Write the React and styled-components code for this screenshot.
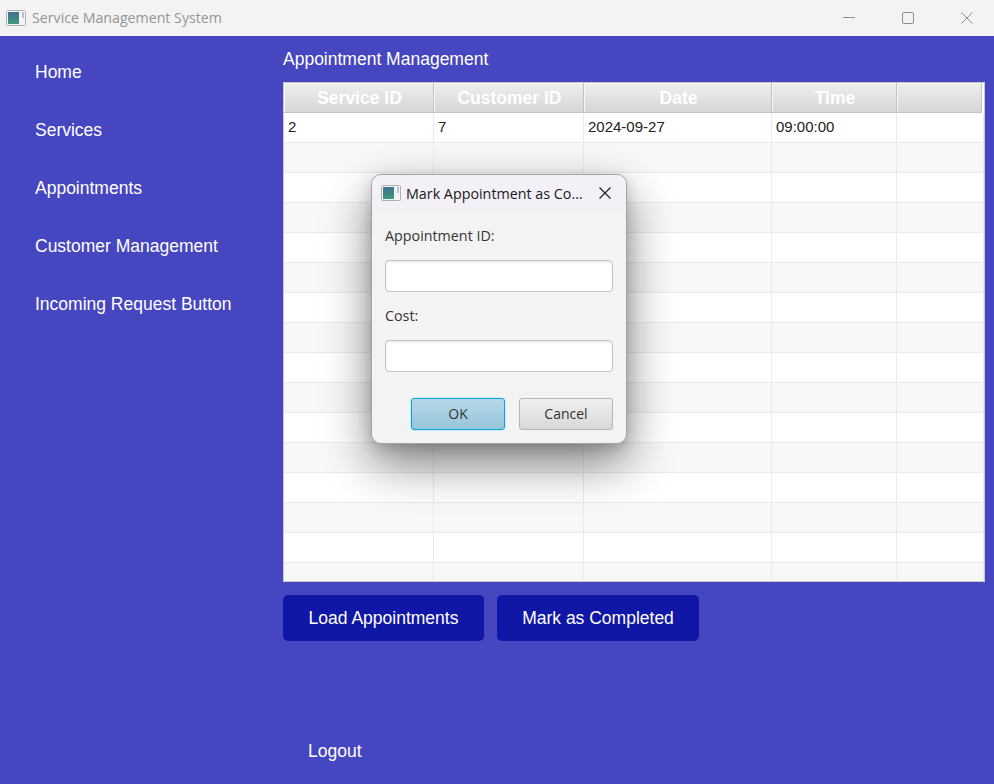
import React from 'react';
import styled, { createGlobalStyle } from 'styled-components';

const Global = createGlobalStyle`
  html, body { margin: 0; padding: 0; background: #4646c1; }
  * { box-sizing: border-box; }
`;

const Windowed = styled.div`
  position: relative;
  width: 994px;
  height: 784px;
  overflow: hidden;
  display: flex;
  flex-direction: column;
  background: #4646c1;
  font-family: "Liberation Sans", Arial, sans-serif;
`;

const TitleBar = styled.header`
  height: 36px;
  flex: none;
  display: flex;
  align-items: center;
  background: #f3f3f3;
  padding-left: 6px;
`;

const TitleText = styled.span`
  margin: -2px 0 0 6px;
  font: 14.2px "Open Sans", "Noto Sans", sans-serif;
  color: #959595;
`;

const WinButtons = styled.div`
  margin-left: auto;
  margin-right: -2px;
  display: flex;
  align-items: center;
`;

const WinButton = styled.span`
  width: 59px;
  height: 36px;
  display: flex;
  align-items: center;
  justify-content: center;
  color: #8f8f8f;
`;

const Body = styled.div`
  flex: 1;
  display: flex;
  min-height: 0;
`;

const Sidebar = styled.nav`
  width: 283px;
  flex: none;
  padding: 26px 0 0 35px;
  display: flex;
  flex-direction: column;
  gap: 37px;
`;

const NavItem = styled.div`
  font-size: 17.5px;
  line-height: 21px;
  color: #fff;
`;

const Main = styled.main`
  flex: 1;
  display: flex;
  flex-direction: column;
  padding: 13px 9px 0 0;
`;

const Heading = styled.h1`
  margin: 0 0 12px;
  font-size: 17.5px;
  font-weight: 400;
  line-height: 21px;
  color: #fff;
`;

const Table = styled.div`
  width: 702px;
  height: 500px;
  border: 1px solid #c8c8c8;
  background: #fff;
  overflow: hidden;
`;

const HeaderRow = styled.div`
  display: grid;
  grid-template-columns: 150px 150px 188px 125px 85px;
  height: 30px;
  width: 698px;
`;

const HeaderCell = styled.div`
  display: flex;
  align-items: center;
  justify-content: center;
  padding: 1px 0 0 2px;
  background: linear-gradient(#efefef, #d6d6d6);
  border-right: 1px solid #c4c4c4;
  border-bottom: 1px solid #c4c4c4;
  box-shadow: inset 1px 1px 0 #f6f6f6;
  font-size: 17.5px;
  font-weight: 700;
  color: #fff;
`;

const Row = styled.div`
  display: grid;
  grid-template-columns: 150px 150px 188px 125px 87px;
  height: 30px;
  background: ${p => (p.$odd ? '#f8f8f8' : '#ffffff')};
`;

const Cell = styled.div`
  display: flex;
  align-items: center;
  padding: 0 0 2px 4px;
  border-right: 1px solid #ebebeb;
  border-bottom: 1px solid #ebebeb;
  font-size: 15px;
  color: #222;
`;

const Actions = styled.div`
  display: flex;
  gap: 13px;
  margin-top: 13px;
`;

const ActionButton = styled.button`
  height: 46px;
  width: ${p => p.$w}px;
  border: 0;
  border-radius: 5px;
  background: #1016a6;
  color: #fff;
  font: 17.5px "Liberation Sans", Arial, sans-serif;
`;

const Logout = styled.div`
  margin: 100px 0 0 25px;
  font-size: 17.5px;
  line-height: 21px;
  color: #fff;
`;

const Dialog = styled.div`
  position: absolute;
  left: 371px;
  top: 174px;
  width: 256px;
  height: 270px;
  display: flex;
  flex-direction: column;
  border: 1px solid #a3a3a3;
  border-radius: 10px;
  background: #f3f3f3;
  box-shadow: 0 20px 48px rgba(0, 0, 0, 0.48), 0 4px 14px rgba(0, 0, 0, 0.16);
  overflow: hidden;
  font-family: "Open Sans", "Noto Sans", sans-serif;
`;

const DialogTitle = styled.div`
  height: 36px;
  flex: none;
  display: flex;
  align-items: center;
  background: #f3f0f7;
  padding-left: 9px;
  font-size: 14.3px;
  color: #1a1a1a;
`;

const DialogTitleText = styled.span`
  margin: 0 0 0 5px;
`;

const DialogClose = styled.span`
  margin-left: auto;
  margin-right: 15px;
  margin-top: -1px;
  display: flex;
  color: #222;
`;

const DialogBody = styled.div`
  flex: 1;
  display: flex;
  flex-direction: column;
  padding: 15px 13px 0 13px;
`;

const Label = styled.label`
  font-size: 14.3px;
  line-height: 20px;
  color: #333;
`;

const Input = styled.input`
  display: block;
  width: 228px;
  height: 32px;
  margin: 14px 0 14px;
  border: 1px solid #c2c2c2;
  border-radius: 4px;
  background: #fff;
  box-shadow: inset 0 2px 2px #f0f0f0;
  outline: none;
`;

const DialogActions = styled.div`
  display: flex;
  justify-content: flex-end;
  gap: 14px;
  margin-top: 12px;
`;

const DialogButton = styled.button`
  width: 94px;
  height: 32px;
  padding: 0 0 2px;
  border-radius: 3px;
  font: 14px "Open Sans", "Noto Sans", sans-serif;
  color: #333;
  border: 1px solid ${p => (p.$primary ? '#0fa3d6' : '#b5b5b5')};
  background: ${p => (p.$primary ? 'linear-gradient(#b6d9ea, #96c4da)' : 'linear-gradient(#f0f0f0, #d8d8d8)')};
  box-shadow: ${p => (p.$primary ? '0 0 0 1px #cfeaf5' : 'none')};
`;

const AppIcon = ({ id }) => (
  <svg width="20" height="16" viewBox="0 0 20 16">
    <defs>
      <linearGradient id={id} x1="0" y1="0" x2="0" y2="1">
        <stop offset="0" stopColor="#3f6f94" />
        <stop offset="1" stopColor="#3f9a7c" />
      </linearGradient>
    </defs>
    <rect x="0.5" y="0.5" width="19" height="15" rx="1" fill="#f4f4f4" stroke="#b0b0b0" />
    <rect x="2" y="2" width="11" height="12" fill={`url(#${id})`} />
    <rect x="16" y="2" width="2" height="6" fill="#b5c4cf" />
  </svg>
);

const columns = 5;
const rows = Array.from({ length: 16 });
const firstRow = ['2', '7', '2024-09-27', '09:00:00', ''];

export default function App() {
  return (
    <Windowed>
      <Global />
      <TitleBar>
        <AppIcon id="iconMain" />
        <TitleText>Service Management System</TitleText>
        <WinButtons>
          <WinButton>
            <svg width="12" height="12" viewBox="0 0 12 12"><path d="M0 5.5h12" stroke="currentColor" /></svg>
          </WinButton>
          <WinButton>
            <svg width="12" height="12" viewBox="0 0 12 12"><rect x="0.5" y="0.5" width="11" height="11" rx="1.5" fill="none" stroke="currentColor" /></svg>
          </WinButton>
          <WinButton>
            <svg width="12" height="12" viewBox="0 0 12 12"><path d="M0.5 0.5l11 11M11.5 0.5l-11 11" stroke="currentColor" /></svg>
          </WinButton>
        </WinButtons>
      </TitleBar>
      <Body>
        <Sidebar>
          {['Home', 'Services', 'Appointments', 'Customer Management', 'Incoming Request Button'].map(t => (
            <NavItem key={t}>{t}</NavItem>
          ))}
        </Sidebar>
        <Main>
          <Heading>Appointment Management</Heading>
          <Table>
            <HeaderRow>
              {['Service ID', 'Customer ID', 'Date', 'Time', ''].map((h, i) => (
                <HeaderCell key={i}>{h}</HeaderCell>
              ))}
            </HeaderRow>
            {rows.map((_, r) => (
              <Row key={r} $odd={r % 2 === 1}>
                {Array.from({ length: columns }).map((__, c) => (
                  <Cell key={c}>{r === 0 ? firstRow[c] : ''}</Cell>
                ))}
              </Row>
            ))}
          </Table>
          <Actions>
            <ActionButton $w={201}>Load Appointments</ActionButton>
            <ActionButton $w={202}>Mark as Completed</ActionButton>
          </Actions>
          <Logout>Logout</Logout>
        </Main>
      </Body>
      <Dialog>
        <DialogTitle>
          <AppIcon id="iconDialog" />
          <DialogTitleText>Mark Appointment as Co...</DialogTitleText>
          <DialogClose>
            <svg width="12" height="12" viewBox="0 0 12 12"><path d="M0.5 0.5l11 11M11.5 0.5l-11 11" stroke="currentColor" strokeWidth="1.2" /></svg>
          </DialogClose>
        </DialogTitle>
        <DialogBody>
          <Label>Appointment ID:</Label>
          <Input />
          <Label>Cost:</Label>
          <Input />
          <DialogActions>
            <DialogButton $primary>OK</DialogButton>
            <DialogButton>Cancel</DialogButton>
          </DialogActions>
        </DialogBody>
      </Dialog>
    </Windowed>
  );
}
